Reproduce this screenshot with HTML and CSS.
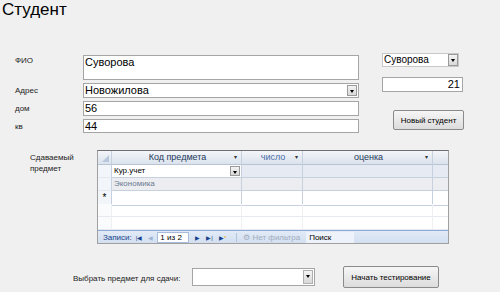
FILE: index.html
```html
<!DOCTYPE html>
<html lang="ru">
<head>
    <meta charset="UTF-8">
    <title>Студент</title>
    <link rel="stylesheet" href="styles.css">
</head>
<body>
    <h1 class="title">Студент</h1>

    <div class="top">
        <div class="fields">
            <label class="lbl lbl-fio">ФИО</label>
            <div class="box box-fio">Суворова</div>
            <label class="lbl">Адрес</label>
            <div class="box box-combo">Новожилова<span class="drop"></span></div>
            <label class="lbl">дом</label>
            <div class="box">56</div>
            <label class="lbl">кв</label>
            <div class="box box-kv">44</div>
        </div>
        <div class="side">
            <div class="box small-combo">Суворова<span class="drop"></span></div>
            <div class="box num">21</div>
            <button class="btn btn-new">Новый студент</button>
        </div>
    </div>

    <div class="sub">
        <div class="sub-label">Сдаваемый<br>предмет</div>
        <div class="sheet">
            <div class="row head">
                <div class="sel corner"></div>
                <div class="cell">Код предмета<span class="arr">&#9662;</span></div>
                <div class="cell light">число<span class="arr">&#9662;</span></div>
                <div class="cell">оценка<span class="arr">&#9662;</span></div>
                <div class="rest"></div>
            </div>
            <div class="row cur">
                <div class="sel"></div>
                <div class="cell edit">Кур.учет<span class="drop"></span></div>
                <div class="cell"></div>
                <div class="cell"></div>
                <div class="rest"></div>
            </div>
            <div class="row alt">
                <div class="sel"></div>
                <div class="cell">Экономика</div>
                <div class="cell"></div>
                <div class="cell"></div>
                <div class="rest"></div>
            </div>
            <div class="row blank">
                <div class="sel">*</div>
                <div class="cell"></div>
                <div class="cell"></div>
                <div class="cell"></div>
                <div class="rest"></div>
            </div>
            <div class="row empty">
                <div class="sel"></div><div class="cell"></div><div class="cell"></div><div class="cell"></div><div class="rest"></div>
            </div>
            <div class="row empty">
                <div class="sel"></div><div class="cell"></div><div class="cell"></div><div class="cell"></div><div class="rest"></div>
            </div>
            <div class="nav">
                <span class="nav-lbl">Записи:</span>
                <span class="nb">|&#9664;</span>
                <span class="nb dim">&#9664;</span>
                <span class="pos">1 из 2</span>
                <span class="nb">&#9654;</span>
                <span class="nb">&#9654;|</span>
                <span class="nb">&#9654;<i>*</i></span>
                <span class="filter">&#9881; Нет фильтра</span>
                <span class="search">Поиск</span>
            </div>
        </div>
    </div>

    <div class="bottom">
        <label class="lbl-pick">Выбрать предмет для сдачи:</label>
        <div class="box pick">&nbsp;<span class="drop"></span></div>
        <button class="btn btn-start">Начать тестирование</button>
    </div>
</body>
</html>
```

FILE: styles.css
```css
body {
    margin: 0;
    padding: 0;
    width: 500px;
    height: 292px;
    background-color: #f0f0f0;
    font-family: 'Liberation Sans', Arial, sans-serif;
    color: #000;
    overflow: hidden;
}
.title {
    margin: 0;
    padding: 0 0 0 2px;
    height: 23px;
    font-size: 17px;
    font-weight: normal;
    line-height: 20px;
}

/* top block */
.top {
    display: flex;
    margin-top: 30px;
    height: 80px;
}
.fields {
    display: grid;
    grid-template-columns: 68px 276px;
    grid-template-rows: 25px 15px 15px 14px;
    row-gap: 3px;
    margin-left: 15px;
    margin-top: 2px;
}
.lbl {
    font-size: 8px;
    color: #222;
    padding-top: 3px;
}
.lbl-fio {
    padding-top: 1px;
}
.box {
    position: relative;
    box-sizing: border-box;
    background: #fff;
    border: 1px solid #a5a5a5;
    font-size: 11px;
    line-height: 13px;
    padding-left: 1px;
    white-space: nowrap;
}
.drop {
    position: absolute;
    top: 1px;
    right: 1px;
    bottom: 1px;
    width: 10px;
    background: linear-gradient(#f4f4f4, #d8d8d8);
    border: 1px solid #9a9a9a;
    box-sizing: border-box;
}
.drop::after {
    content: "";
    position: absolute;
    left: 2px;
    top: 4px;
    border-left: 2px solid transparent;
    border-right: 2px solid transparent;
    border-top: 3px solid #000;
}
.side {
    display: flex;
    flex-direction: column;
    margin-left: 23px;
}
.small-combo {
    width: 77px;
    height: 14px;
    font-size: 10px;
    line-height: 12px;
    border-color: #c8c8c8;
}
.small-combo .drop {
    top: 0;
    bottom: 0;
    right: 0;
}
.num {
    width: 81px;
    height: 15px;
    margin-top: 10px;
    text-align: right;
    padding-right: 2px;
}
.btn {
    box-sizing: border-box;
    font-family: 'Liberation Sans', Arial, sans-serif;
    font-size: 8px;
    color: #000;
    background: linear-gradient(#f6f6f6, #dcdcdc);
    border: 1px solid #8a8a8a;
    border-radius: 2px;
    padding: 0;
}
.btn-new {
    width: 71px;
    height: 20px;
    margin-top: 18px;
    margin-left: 11px;
}

/* subform */
.sub {
    display: flex;
    margin-top: 17px;
}
.sub-label {
    width: 67px;
    margin-left: 30px;
    padding-top: 2px;
    font-size: 8px;
    line-height: 11px;
    color: #222;
}
.sheet {
    width: 350px;
    border: 1px solid #a0a0a0;
    border-top-color: #6e6e6e;
    background: #fff;
}
.row {
    display: grid;
    grid-template-columns: 14px 130px 61px 130px 1fr;
    height: 13px;
    font-size: 8px;
    line-height: 12px;
}
.row > div {
    border-bottom: 1px solid #e6e9ef;
}
.cell {
    position: relative;
    border-right: 1px solid #c6d0de;
    padding-left: 2px;
}
.sel {
    background: #f2f5f9;
    border-right: 1px solid #c6d0de;
    font-size: 10px;
    text-align: center;
    line-height: 14px;
}
.head {
    height: 14px;
}
.head > div {
    background: linear-gradient(#f3f6fa, #dbe2ec);
    border-bottom: 1px solid #b8c4d6;
}
.head .cell {
    text-align: center;
    font-size: 9px;
    color: #1e395b;
    line-height: 13px;
}
.head .light {
    color: #4a6ea9;
}
.corner {
    position: relative;
}
.corner::after {
    content: "";
    position: absolute;
    right: 2px;
    bottom: 2px;
    border-left: 7px solid transparent;
    border-bottom: 7px solid #b9c7dc;
}
.arr {
    position: absolute;
    right: 4px;
    font-size: 6px;
    color: #333;
}
.cur > .cell, .cur > .rest {
    background: #e6ebf3;
    border-bottom-color: #c6d0de;
}
.cur .edit {
    background: #fff;
    color: #000;
}
.alt > .cell, .alt > .rest {
    background: #ebedf1;
    color: #6c7a90;
    border-bottom-color: #c6d0de;
}
.blank > .cell, .blank > .rest {
    border-bottom-color: #c6d0de;
}
.empty > .cell {
    border-right-color: #eef0f4;
}
.empty > .sel {
    background: #fafbfd;
    border-right-color: #eef0f4;
}
.nav {
    display: flex;
    align-items: center;
    height: 12px;
    background: linear-gradient(#e2eaf6, #d3dff0);
    border-top: 1px solid #8eaad6;
    font-size: 8px;
    color: #15428b;
}
.nav-lbl {
    margin-left: 5px;
    margin-right: 4px;
}
.nb {
    font-size: 6px;
    margin-right: 6px;
    color: #15428b;
}
.nb i {
    font-style: normal;
    color: #e0a800;
}
.nb.dim {
    color: #9fb3d3;
}
.pos {
    box-sizing: border-box;
    width: 32px;
    height: 11px;
    margin-right: 6px;
    margin-left: -2px;
    background: #fff;
    border: 1px solid #a7bbdb;
    color: #000;
    line-height: 9px;
    padding-left: 2px;
}
.filter {
    margin-left: 4px;
    padding-left: 6px;
    border-left: 1px solid #b3c4de;
    color: #a1adbf;
}
.search {
    width: 45px;
    margin-left: 6px;
    padding-left: 3px;
    background: #eef3fb;
    color: #000;
    line-height: 11px;
}

/* bottom */
.bottom {
    display: flex;
    align-items: center;
    margin-top: 22px;
    margin-left: 73px;
}
.lbl-pick {
    width: 119px;
    font-size: 8px;
    color: #222;
    margin-top: 2px;
}
.pick {
    width: 123px;
    height: 18px;
}
.pick .drop {
    border-color: #b0b0b0;
}
.btn-start {
    width: 96px;
    height: 22px;
    margin-left: 28px;
}
```
